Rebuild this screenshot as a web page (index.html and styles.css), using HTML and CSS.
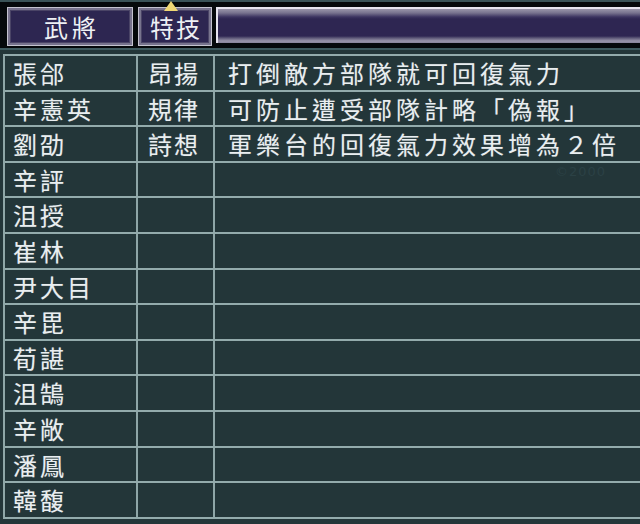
FILE: index.html
```html
<!DOCTYPE html>
<html lang="zh-Hant">
<head>
<meta charset="utf-8">
<link rel="stylesheet" href="styles.css">
</head>
<body>
<div class="screen">
  <div class="header">
    <div class="btn btn-general">武將</div>
    <div class="btn btn-skill">特技<span class="marker"></span></div>
    <div class="bar"></div>
  </div>
  <div class="sep"></div>
  <div class="table">
    <div class="row"><div class="c name">張郃</div><div class="c skill">昂揚</div><div class="c desc">打倒敵方部隊就可回復氣力</div></div>
    <div class="row"><div class="c name">辛憲英</div><div class="c skill">規律</div><div class="c desc">可防止遭受部隊計略「偽報」</div></div>
    <div class="row"><div class="c name">劉劭</div><div class="c skill">詩想</div><div class="c desc">軍樂台的回復氣力效果增為２倍</div></div>
    <div class="row"><div class="c name">辛評</div><div class="c skill"></div><div class="c desc"></div></div>
    <div class="row"><div class="c name">沮授</div><div class="c skill"></div><div class="c desc"></div></div>
    <div class="row"><div class="c name">崔林</div><div class="c skill"></div><div class="c desc"></div></div>
    <div class="row"><div class="c name">尹大目</div><div class="c skill"></div><div class="c desc"></div></div>
    <div class="row"><div class="c name">辛毘</div><div class="c skill"></div><div class="c desc"></div></div>
    <div class="row"><div class="c name">荀諶</div><div class="c skill"></div><div class="c desc"></div></div>
    <div class="row"><div class="c name">沮鵠</div><div class="c skill"></div><div class="c desc"></div></div>
    <div class="row"><div class="c name">辛敞</div><div class="c skill"></div><div class="c desc"></div></div>
    <div class="row"><div class="c name">潘鳳</div><div class="c skill"></div><div class="c desc"></div></div>
    <div class="row"><div class="c name">韓馥</div><div class="c skill"></div><div class="c desc"></div></div>
  </div>
  <div class="watermark">©2000</div>
</div>
</body>
</html>
```
FILE: styles.css
```css
html, body {
  margin: 0;
  padding: 0;
  background: #233639;
}
.screen {
  position: relative;
  width: 640px;
  height: 524px;
  overflow: hidden;
  background: #233639;
  font-family: "Noto Sans CJK TC", "Noto Sans CJK JP", sans-serif;
  color: #e9eef0;
}
.header {
  height: 48px;
  background: #05090b;
  border-top: 2px solid #3a5357;
  display: flex;
  align-items: flex-start;
  padding: 5px 0 0 7px;
  box-sizing: border-box;
  gap: 5px;
}
.btn {
  position: relative;
  height: 39px;
  box-sizing: border-box;
  background: #2d2651;
  border: 1px solid #c4c3cf;
  box-shadow: inset 0 0 0 2px #77738d, inset 0 0 0 3px #4a4466;
  display: flex;
  align-items: center;
  justify-content: center;
  font-size: 24px;
  letter-spacing: 4px;
  text-indent: 4px;
  line-height: 1;
  color: #eef0f4;
}
.btn-general {
  width: 126px;
}
.btn-skill {
  width: 74px;
  letter-spacing: 2px;
  text-indent: 2px;
}
.marker {
  position: absolute;
  left: 25px;
  top: -7px;
  width: 0;
  height: 0;
  border-left: 7px solid transparent;
  border-right: 7px solid transparent;
  border-bottom: 10px solid #efd774;
}
.bar {
  flex: 1;
  margin-left: -1px;
  margin-right: -10px;
  height: 36px;
  box-sizing: border-box;
  border-top: 2px solid #e6e4ee;
  border-left: 2px solid #e6e4ee;
  background: linear-gradient(#9a96aa 0, #77728e 4px, #3b3360 8px, #2e2652 10px, #2e2652 27px, #5d5878 29px, #9995aa 32px, #747088 36px);
}
.sep {
  height: 2px;
  background: #3f5b5f;
}
.table {
  margin-top: 4px;
  margin-left: 3px;
  border-left: 2px solid #8ea6a7;
  border-bottom: 2px solid #93abac;
}
.row {
  display: grid;
  grid-template-columns: 131px 2px 75px 2px 1fr;
  height: 35.6px;
  box-sizing: border-box;
  border-top: 2px solid #93abac;
}
.c {
  font-size: 24px;
  line-height: 33.6px;
  letter-spacing: 4px;
  white-space: nowrap;
  color: #e9eef0;
  text-shadow: 0 0 1px rgba(255, 255, 255, 0.3);
}
.name {
  padding-left: 8px;
  letter-spacing: 3px;
}
.skill {
  grid-column: 3;
  padding-left: 10px;
  letter-spacing: 2px;
  border-left: 2px solid #8ea6a7;
  margin-left: -2px;
}
.desc {
  grid-column: 5;
  padding-left: 13px;
  border-left: 2px solid #8ea6a7;
  margin-left: -2px;
}
.watermark {
  position: absolute;
  left: 555px;
  top: 165px;
  font-family: "DejaVu Sans", sans-serif;
  font-size: 13px;
  line-height: 13px;
  letter-spacing: 1px;
  color: #2b4145;
}
```
